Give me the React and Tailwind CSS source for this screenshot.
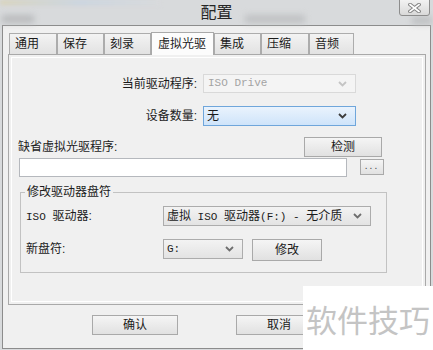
import React from "react";

const MONO = "font-['Liberation_Mono','DejaVu_Sans_Mono',monospace] text-[11px]";

function Chevron({ color }) {
  return (
    <svg width="9" height="6" viewBox="0 0 9 6">
      <path d="M1 1 L4.5 4.5 L8 1" fill="none" stroke={color} strokeWidth="1.8" />
    </svg>
  );
}

function Btn({ className, children }) {
  return (
    <div
      className={`flex items-center justify-center border border-[#a9a9a9] bg-gradient-to-b from-[#f5f5f5] to-[#e1e1e1] text-[12px] text-[#1a1a1a] ${className}`}
    >
      {children}
    </div>
  );
}

function Tab({ className, children, active }) {
  if (active) {
    return (
      <div
        className={`relative z-10 -mb-px h-[23px] flex items-center pl-[6px] border border-b-0 border-[#a9a9a9] bg-[#fcfcfc] ${className}`}
      >
        {children}
      </div>
    );
  }
  return (
    <div
      className={`h-[21px] flex items-center pl-[5px] border border-b-0 border-[#acacac] bg-gradient-to-b from-[#f3f3f3] to-[#e2e2e2] ${className}`}
    >
      {children}
    </div>
  );
}

export default function App() {
  return (
    <div className="relative w-[433px] h-[350px] overflow-hidden bg-[#d8dadc] font-['Liberation_Sans','Noto_Sans_CJK_SC',sans-serif] text-[12px] text-[#1b1b1b] leading-none">
      {/* title bar */}
      <div className="relative h-[25px] flex items-center justify-center">
        <div className="absolute left-0 top-0 w-[160px] h-[5px] bg-gradient-to-r from-[#d9d3b8] via-[#c9d4e0] to-[#d8dadc] blur-[2px]" />
        <div className="absolute left-[2px] top-[15px] w-[32px] h-[8px] bg-[#b9bbbd] blur-[3px]" />
        <div className="absolute left-[245px] top-[15px] w-[60px] h-[8px] bg-[#bfc1c3] blur-[3px]" />
        <div className="absolute left-[412px] top-[17px] w-[20px] h-[7px] bg-[#bcbec0] blur-[3px]" />
        <span className="relative text-[16px] text-[#262626] mt-[-3px] font-['Noto_Sans_CJK_SC',sans-serif]">配置</span>
        <div className="absolute right-[3px] top-[-1px] w-[31px] h-[17px] border border-[#8d8d8d] rounded-b-[3px] bg-gradient-to-b from-[#f2f2f2] to-[#d9d9d9] flex items-center justify-center">
          <svg width="13" height="10" viewBox="0 0 13 10">
            <path d="M2 1.5 L11 8.5 M11 1.5 L2 8.5" stroke="#858585" strokeWidth="3.6" strokeLinecap="square" />
            <path d="M2 1.5 L11 8.5 M11 1.5 L2 8.5" stroke="#ffffff" strokeWidth="1.6" strokeLinecap="square" />
          </svg>
        </div>
      </div>

      {/* dialog body */}
      <div className="ml-[2px] w-[429px] h-[324px] border border-[#8c8c8c] bg-[#f0f0f0] flex flex-col">
        {/* tabs */}
        <div className="mt-[6px] pl-[6px] h-[22px] flex items-end">
          <Tab className="w-[48px]">通用</Tab>
          <Tab className="w-[47px]">保存</Tab>
          <Tab className="w-[47px]">刻录</Tab>
          <Tab active className="w-[63px]">虚拟光驱</Tab>
          <Tab className="w-[47px]">集成</Tab>
          <Tab className="w-[48px]">压缩</Tab>
          <Tab className="w-[45px]">音频</Tab>
        </div>

        {/* panel */}
        <div className="ml-[5px] w-[418px] h-[251px] border border-[#a9a9a9] bg-[#f0f0f0] p-[2px]">
          <div className="h-full border border-white flex flex-col">
            {/* row 1 */}
            <div className="mt-[16px] h-[19px] flex items-center">
              <div className="w-[185px] text-right">当前驱动程序:</div>
              <div className="ml-[6px] w-[153px] h-[19px] border border-[#d9d9d9] bg-[#f4f4f4] flex items-center justify-between pl-[4px] pr-[8px]">
                <span className={`${MONO} text-[#a3a3a3]`}>ISO Drive</span>
                <Chevron color="#c4c4c4" />
              </div>
            </div>

            {/* row 2 */}
            <div className="mt-[13px] h-[20px] flex items-center">
              <div className="w-[185px] text-right">设备数量:</div>
              <div className="ml-[6px] w-[153px] h-[20px] border border-[#6fa6db] bg-gradient-to-b from-[#eaf3fd] to-[#cfe4fa] flex items-center justify-between pl-[3px] pr-[8px]">
                <span>无</span>
                <Chevron color="#3c3c3c" />
              </div>
            </div>

            {/* row 3 */}
            <div className="mt-[11px] h-[20px] flex items-center justify-between">
              <div className="pl-[6px]">缺省虚拟光驱程序:</div>
              <Btn className="w-[78px] h-[20px] mr-[40px]">检测</Btn>
            </div>

            {/* row 4 */}
            <div className="mt-[1px] flex items-start">
              <div className="ml-[7px] w-[328px] h-[19px] border border-[#b5b8bd] bg-white" />
              <Btn className="ml-[13px] mt-[1px] w-[24px] h-[16px]">
                <span className="text-[10px] tracking-[2px] text-[#444] mt-[-2px]">...</span>
              </Btn>
            </div>

            {/* group box */}
            <div className="relative mt-[15px] ml-[8px] w-[367px] h-[81px] border border-[#c2c2c2] flex flex-col">
              <span className="absolute left-[4px] -top-[9px] px-[2px] bg-[#f0f0f0] leading-[16px]">修改驱动器盘符</span>

              <div className="mt-[13px] h-[20px] flex items-center">
                <div className="w-[142px] pl-[5px]">
                  <span className={MONO}>ISO </span>驱动器:
                </div>
                <div className="w-[208px] h-[20px] border border-[#acacac] bg-gradient-to-b from-[#f3f3f3] to-[#e3e3e3] flex items-center justify-between pl-[3px] pr-[8px]">
                  <span>
                    虚拟<span className={MONO}> ISO </span>驱动器<span className={MONO}>(F:) - </span>无介质
                  </span>
                  <Chevron color="#6e6e6e" />
                </div>
              </div>

              <div className="mt-[13px] h-[22px] flex items-start">
                <div className="w-[142px] pl-[5px] h-[20px] flex items-center">新盘符:</div>
                <div className="w-[80px] h-[20px] border border-[#acacac] bg-gradient-to-b from-[#f3f3f3] to-[#e3e3e3] flex items-center justify-between pl-[3px] pr-[8px]">
                  <span className={MONO}>G:</span>
                  <Chevron color="#6e6e6e" />
                </div>
                <Btn className="ml-[9px] w-[70px] h-[22px]">修改</Btn>
              </div>
            </div>
          </div>
        </div>

        {/* bottom buttons */}
        <div className="mt-[10px] ml-[89px] flex">
          <Btn className="w-[86px] h-[20px]">确认</Btn>
          <Btn className="ml-[58px] w-[86px] h-[20px]">取消</Btn>
        </div>
      </div>

      {/* watermark */}
      <div className="absolute right-0 bottom-0 w-[130px] h-[64px] bg-white flex items-center justify-center">
        <span className="text-[31px] text-[#c4c4c4] font-['Noto_Sans_CJK_SC',sans-serif] leading-none">软件技巧</span>
      </div>
    </div>
  );
}
